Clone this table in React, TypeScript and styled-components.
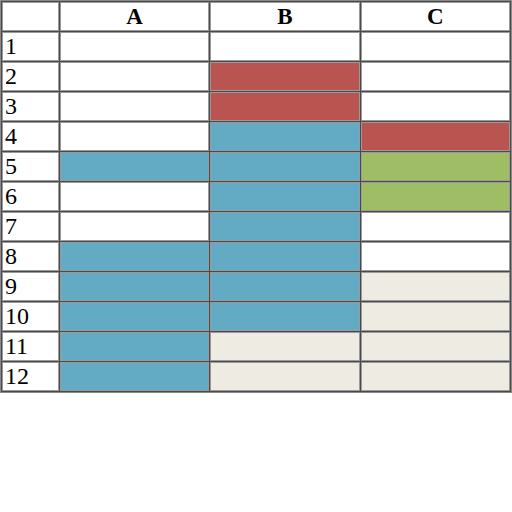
import React from 'react'
import styled, {createGlobalStyle} from "styled-components";

const GlobalStyle = createGlobalStyle`
  html, body {
    margin: 0;
    padding: 0;
    background: #fff;
  }
`

type Fill = 'w' | 'r' | 'b' | 'g' | 'e'

const fills: Record<Fill, string> = {
    w: '#ffffff',
    r: '#b95450',
    b: '#63aac5',
    g: '#9fbd65',
    e: '#eeebe3',
}

const rows: Fill[][] = [
    ['w', 'w', 'w'],
    ['w', 'r', 'w'],
    ['w', 'r', 'w'],
    ['w', 'b', 'r'],
    ['b', 'b', 'g'],
    ['w', 'b', 'g'],
    ['w', 'b', 'w'],
    ['b', 'b', 'w'],
    ['b', 'b', 'e'],
    ['b', 'b', 'e'],
    ['b', 'e', 'e'],
    ['b', 'e', 'e'],
]

const S = {
    Table: styled.table`
      border-collapse: separate;
      border-spacing: 1px;
      border: 1px solid #8a8a8a;
      background: #4a4a4a;
      width: 512px;
      table-layout: fixed;
      font-family: "Liberation Serif", "Times New Roman", serif;
      font-size: 24px;
      color: #000;
    `,
    Corner: styled.th`
      width: 55px;
      height: 27px;
      padding: 0;
      border: 1px solid #9a9a9a;
      background: #fff;
    `,
    Head: styled.th`
      height: 27px;
      padding: 0;
      border: 1px solid #9a9a9a;
      background: #fff;
      font-size: 23px;
      font-weight: bold;
      text-align: center;
      line-height: 27px;
    `,
    Num: styled.td`
      height: 27px;
      padding: 0 0 0 2px;
      border: 1px solid #9a9a9a;
      background: #fff;
      text-align: left;
      line-height: 27px;
      vertical-align: middle;
    `,
    Cell: styled.td<{fill: string}>`
      height: 27px;
      padding: 0;
      border: 1px solid #9a9a9a;
      background: ${props => props.fill};
    `,
}

function App() {
    return (
        <>
            <GlobalStyle/>
            <S.Table>
                <thead>
                <tr>
                    <S.Corner/>
                    <S.Head>A</S.Head>
                    <S.Head>B</S.Head>
                    <S.Head>C</S.Head>
                </tr>
                </thead>
                <tbody>
                {rows.map((row, index) => (
                    <tr key={index}>
                        <S.Num>{index + 1}</S.Num>
                        {row.map((f, i) => <S.Cell key={i} fill={fills[f]}/>)}
                    </tr>
                ))}
                </tbody>
            </S.Table>
        </>
    )
}

export default App;
